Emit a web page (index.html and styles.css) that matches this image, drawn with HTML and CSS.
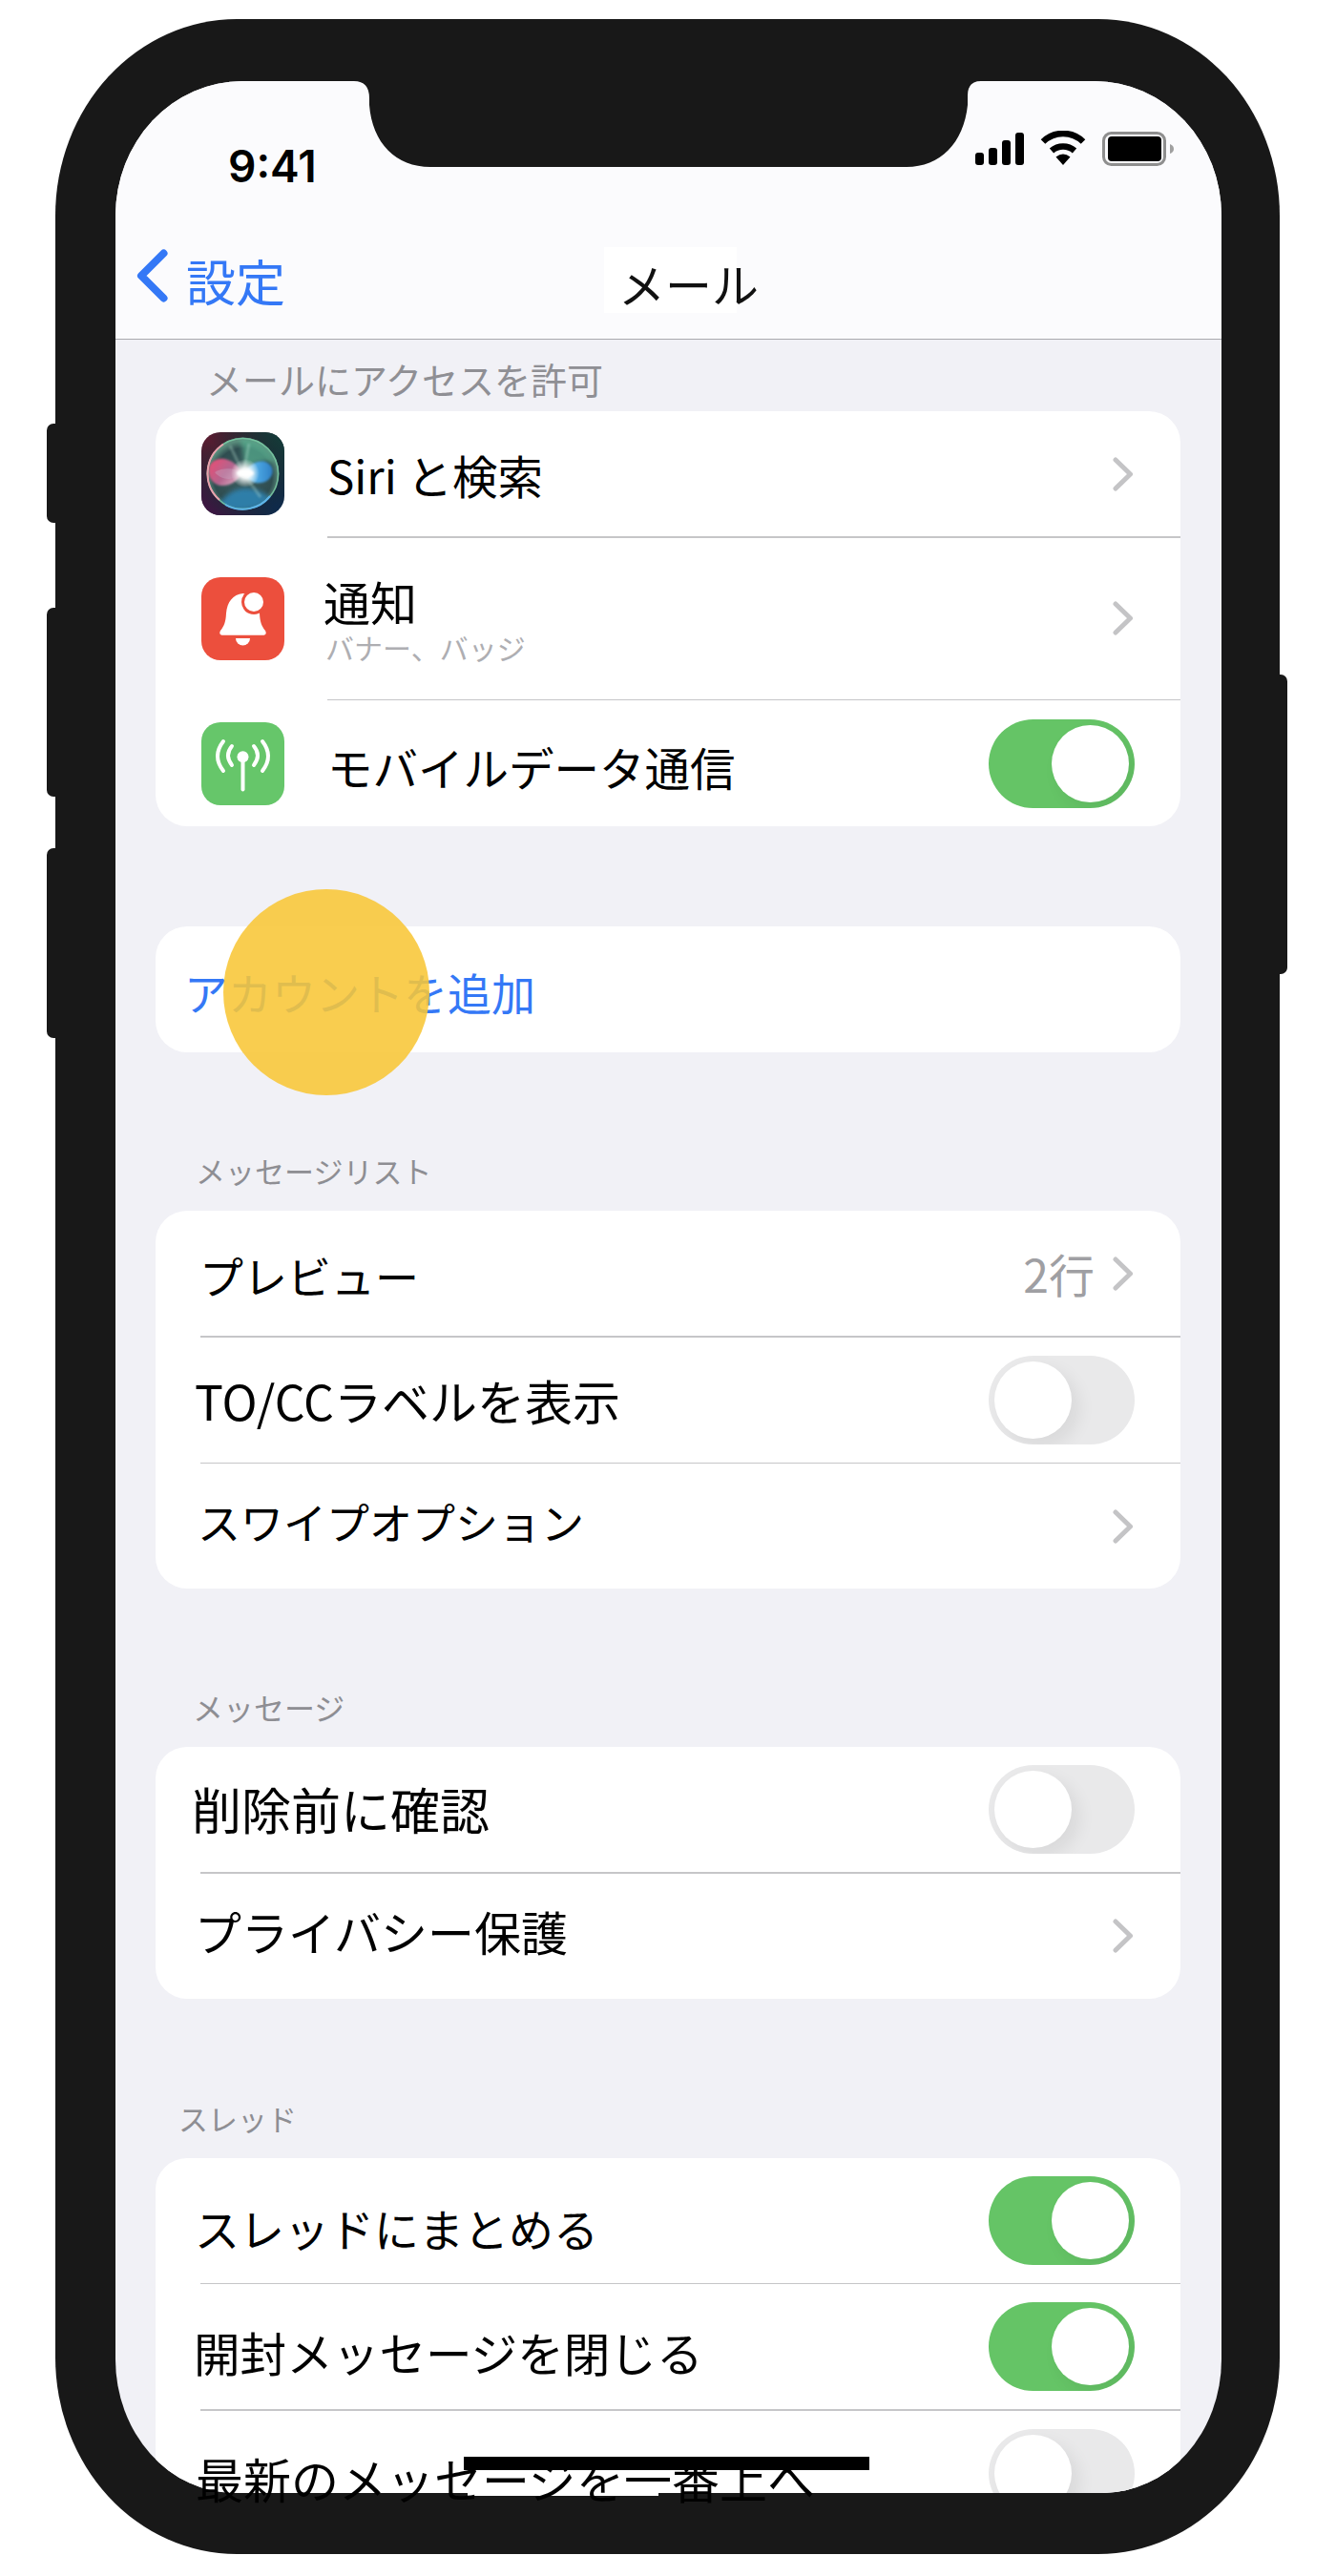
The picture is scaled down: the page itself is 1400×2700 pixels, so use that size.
FILE: index.html
```html
<!DOCTYPE html>
<html lang="ja">
<head>
<meta charset="utf-8">
<title>メール</title>
<link rel="stylesheet" href="styles.css">
</head>
<body>
<div class="device">
  <span class="btn-side btn-mute"></span>
  <span class="btn-side btn-up"></span>
  <span class="btn-side btn-down"></span>
  <span class="btn-side btn-power"></span>
  <div class="screen">
    <header class="nav">
      <div class="status">
        <span class="time">9:41</span>
        <div class="status-icons">
          <svg class="ic-signal" width="51" height="34" viewBox="0 0 51 34"><rect x="0" y="21" width="9" height="13" rx="3"/><rect x="14" y="16" width="9" height="18" rx="3"/><rect x="28" y="8" width="9" height="26" rx="3"/><rect x="42" y="0" width="9" height="34" rx="3"/></svg>
          <svg class="ic-wifi" width="48" height="36" viewBox="0 0 48 36"><path d="M3 11.5A30 30 0 0 1 45 11.5" fill="none" stroke="#000" stroke-width="6.5"/><path d="M12 21A18 18 0 0 1 36 21" fill="none" stroke="#000" stroke-width="6.5"/><path d="M24 36L16.500 27.500Q24 21.500 31.500 27.500Z"/></svg>
          <svg class="ic-batt" width="75" height="36" viewBox="0 0 75 36"><rect x="1.500" y="1.500" width="64" height="33" rx="8" fill="none" stroke="#8e8e8e" stroke-width="3"/><rect x="6" y="5" width="56" height="26" rx="4"/><path d="M71 13Q75 14.500 75 18Q75 21.500 71 23Z" fill="#a0a0a0"/></svg>
        </div>
      </div>
      <div class="navrow">
        <div class="back">
          <svg class="back-chev" width="33" height="56" viewBox="0 0 33 56"><path d="M28.500 4.500L5 28L28.500 51.500" fill="none" stroke="#3478f6" stroke-width="8" stroke-linecap="round" stroke-linejoin="round"/></svg>
          <span class="back-text">設定</span>
        </div>
        <div class="title">メール</div>
      </div>
    </header>

    <main class="content">
      <div class="label label-first">メールにアクセスを許可</div>
      <section class="card">
        <div class="row row-a">
          <svg class="app" width="87" height="87" viewBox="0 0 87 87">
            <defs>
              <linearGradient id="sbg" x1="0" y1="0" x2="1" y2="1"><stop offset="0" stop-color="#641a30"/><stop offset=".5" stop-color="#1c2a33"/><stop offset="1" stop-color="#0c2a50"/></linearGradient>
              <linearGradient id="sbg2" x1="1" y1="0" x2="0" y2="1"><stop offset="0" stop-color="#12403a"/><stop offset=".5" stop-color="#1c2a33" stop-opacity="0"/><stop offset="1" stop-color="#4a0f48"/></linearGradient>
              <radialGradient id="sph" cx=".5" cy=".55" r=".5"><stop offset="0" stop-color="#3d5f62"/><stop offset=".8" stop-color="#2f4d50"/><stop offset="1" stop-color="#5a8c7c"/></radialGradient>
              <linearGradient id="lobeR" x1="0" y1="0" x2="1" y2=".6"><stop offset="0" stop-color="#ef4a72"/><stop offset=".6" stop-color="#b4658e"/><stop offset="1" stop-color="#d9a8c0"/></linearGradient>
              <linearGradient id="lobeB" x1="0" y1=".5" x2="1" y2=".5"><stop offset="0" stop-color="#9fe0ee"/><stop offset=".5" stop-color="#4aa5e2"/><stop offset="1" stop-color="#2f7fc4"/></linearGradient>
              <radialGradient id="glow"><stop offset="0" stop-color="#fff"/><stop offset=".35" stop-color="#fff" stop-opacity=".9"/><stop offset="1" stop-color="#fff" stop-opacity="0"/></radialGradient>
              <filter id="b2"><feGaussianBlur stdDeviation="2.500"/></filter>
              <filter id="b1"><feGaussianBlur stdDeviation=".8"/></filter>
              <clipPath id="icl"><rect width="87" height="87" rx="20"/></clipPath>
              <clipPath id="scl"><circle cx="43.500" cy="43.500" r="38"/></clipPath>
            </defs>
            <g clip-path="url(#icl)">
              <rect width="87" height="87" fill="url(#sbg)"/>
              <rect width="87" height="87" fill="url(#sbg2)"/>
              <circle cx="43.500" cy="43.500" r="38" fill="url(#sph)"/>
              <g clip-path="url(#scl)">
                <path d="M40 8C54 4 70 14 78 32C66 28 54 32 46 40C44 28 44 18 40 8Z" fill="#58b090" filter="url(#b2)" opacity=".7"/>
                <path d="M18 76C30 58 50 52 72 68C62 84 30 86 18 76Z" fill="#2f86b8" filter="url(#b2)" opacity=".85"/>
                <path d="M44 43C36 30 20 22 10 33C4 42 10 56 22 56C32 56 38 50 44 43Z" fill="url(#lobeR)" filter="url(#b1)"/>
                <path d="M44 43C50 54 62 56 70 50C77 44 76 34 67 31C57 29 50 35 44 43Z" fill="url(#lobeB)" filter="url(#b1)"/>
                <path d="M14 42C24 36 36 38 44 43C36 50 22 52 14 42Z" fill="#c8a0bc" opacity=".45"/>
                <path d="M44 43L50 12M44 43L30 14M44 43L62 68" stroke="#bfe8d8" stroke-width="3" opacity=".3" filter="url(#b1)"/>
              </g>
              <circle cx="43.500" cy="43.500" r="37" fill="none" stroke="#79c8a2" stroke-width="1.500" opacity=".85"/>
              <path d="M23 12.500A37 37 0 0 0 19 71" fill="none" stroke="#eba0ac" stroke-width="2"/>
              <path d="M25 76A37 37 0 0 0 72 67" fill="none" stroke="#5db4ea" stroke-width="2"/>
              <circle cx="46" cy="43" r="15" fill="url(#glow)"/>
              <ellipse cx="46" cy="43" rx="9" ry="3.500" fill="#fff" filter="url(#b1)"/>
            </g>
          </svg>
          <span class="text text-app t-siri">Siri と検索</span>
          <svg class="chev" width="21" height="36" viewBox="0 0 21 36"><path d="M3 3L18.500 18L3 33" fill="none" stroke="#c4c4c6" stroke-width="5" stroke-linecap="round" stroke-linejoin="round"/></svg>
        </div>
        <div class="sep sep-app"></div>
        <div class="row row-b">
          <svg class="app" width="87" height="87" viewBox="0 0 87 87">
            <rect width="87" height="87" rx="20" fill="#ec4f3d"/>
            <path d="M43.500 17C33 18 27 26 26 38C25.500 47 24 51 20 56Q18 60 21.500 60.700H65.500Q69 60 67 56C63 51 61.500 47 61 38C60 26 54 18 43.500 17Z" fill="#fff"/>
            <circle cx="55" cy="26" r="13" fill="#ec4f3d"/>
            <circle cx="55" cy="26" r="10" fill="#fff"/>
            <path d="M36 64H51A7.500 7.500 0 0 1 36 64Z" fill="#fff"/>
          </svg>
          <div class="stack">
            <span class="text t-notify">通知</span>
            <span class="sub">バナー、バッジ</span>
          </div>
          <svg class="chev" width="21" height="36" viewBox="0 0 21 36"><path d="M3 3L18.500 18L3 33" fill="none" stroke="#c4c4c6" stroke-width="5" stroke-linecap="round" stroke-linejoin="round"/></svg>
        </div>
        <div class="sep sep-app"></div>
        <div class="row row-c">
          <svg class="app" width="87" height="87" viewBox="0 0 87 87">
            <rect width="87" height="87" rx="20" fill="#66c66a"/>
            <g fill="none" stroke="#fff" stroke-width="4" stroke-linecap="round">
              <path d="M23 20Q11 35.500 23 51"/>
              <path d="M32 25Q24 34.500 32 45"/>
              <path d="M64 20Q76 35.500 64 51"/>
              <path d="M55 25Q63 34.500 55 45"/>
              <path d="M43.500 38V70.500"/>
            </g>
            <circle cx="43.500" cy="36.300" r="6" fill="#fff"/>
          </svg>
          <span class="text text-app t-mobile">モバイルデータ通信</span>
          <span class="toggle on"><i></i></span>
        </div>
      </section>

      <section class="card card-add">
        <div class="row-add"><span class="add-text">アカウントを追加</span></div>
      </section>

      <div class="label label-list">メッセージリスト</div>
      <section class="card">
        <div class="row row-a pl">
          <span class="text t-preview">プレビュー</span>
          <span class="value">2行</span>
          <svg class="chev chev-v" width="21" height="36" viewBox="0 0 21 36"><path d="M3 3L18.500 18L3 33" fill="none" stroke="#c4c4c6" stroke-width="5" stroke-linecap="round" stroke-linejoin="round"/></svg>
        </div>
        <div class="sep sep-text"></div>
        <div class="row row-a pl">
          <span class="text t-tocc">TO/CCラベルを表示</span>
          <span class="toggle"><i></i></span>
        </div>
        <div class="sep sep-text"></div>
        <div class="row row-a pl">
          <span class="text t-swipe">スワイプオプション</span>
          <svg class="chev" width="21" height="36" viewBox="0 0 21 36"><path d="M3 3L18.500 18L3 33" fill="none" stroke="#c4c4c6" stroke-width="5" stroke-linecap="round" stroke-linejoin="round"/></svg>
        </div>
      </section>

      <div class="label label-msg">メッセージ</div>
      <section class="card">
        <div class="row row-a pl">
          <span class="text t-delete">削除前に確認</span>
          <span class="toggle"><i></i></span>
        </div>
        <div class="sep sep-text"></div>
        <div class="row row-a pl">
          <span class="text t-privacy">プライバシー保護</span>
          <svg class="chev" width="21" height="36" viewBox="0 0 21 36"><path d="M3 3L18.500 18L3 33" fill="none" stroke="#c4c4c6" stroke-width="5" stroke-linecap="round" stroke-linejoin="round"/></svg>
        </div>
      </section>

      <div class="label label-thread">スレッド</div>
      <section class="card">
        <div class="row row-a pl">
          <span class="text t-group">スレッドにまとめる</span>
          <span class="toggle on"><i></i></span>
        </div>
        <div class="sep sep-text"></div>
        <div class="row row-a pl">
          <span class="text t-close">開封メッセージを閉じる</span>
          <span class="toggle on"><i></i></span>
        </div>
        <div class="sep sep-text"></div>
        <div class="row row-a pl">
          <span class="toggle"><i></i></span>
        </div>
      </section>
    </main>

    <svg class="notch" width="660" height="90" viewBox="0 0 660 90"><path d="M0 0Q16 0 16 18V25C19 65 44 90 80 90H579C614 90 639 65 643 25V15Q643 0 657 0Z" fill="#181818"/></svg>
    <span class="tap"></span>
  </div>
  <span class="edge-patch"></span>
  <span class="last-label">最新のメッセージを一番上へ</span>
  <span class="home-bar"></span>
</div>
</body>
</html>
```
FILE: styles.css
```css
* { box-sizing: border-box; }
html, body { margin: 0; background: #fff; }
body { font-family: "Noto Sans CJK JP", "Noto Sans", sans-serif; padding: 20px 0 0 58px; height: 2700px; overflow: hidden; }

.device { position: relative; width: 1283px; height: 2657px; background: #181818; border-radius: 190px / 206px; padding: 65px 61px 64px 63px; }
.btn-side { position: absolute; width: 14px; left: -9px; background: #181818; border-radius: 7px 0 0 7px; }
.btn-mute { top: 424px; height: 104px; }
.btn-up { top: 617px; height: 198px; }
.btn-down { top: 869px; height: 199px; }
.btn-power { left: auto; right: -8px; top: 687px; height: 314px; border-radius: 0 7px 7px 0; }

.screen { position: relative; width: 1159px; height: 2528px; background: #f1f1f6; border-radius: 133px 133px 125px 125px / 141px 141px 140px 140px; overflow: hidden; }

.nav { height: 271px; background: #fbfbfd; border-bottom: 1.5px solid #a9a9ad; }
.status { display: flex; justify-content: space-between; height: 170px; padding: 54px 50px 0 118px; }
.time { font-family: Inter, "Liberation Sans", sans-serif; font-weight: 600; font-size: 46px; line-height: 1; margin-top: 12px; color: #000; }
.status-icons { display: flex; align-items: flex-start; }
.ic-wifi { margin-left: 17px; margin-top: -2px; }
.ic-batt { margin-left: 17px; margin-top: -1px; }

.navrow { display: flex; align-items: flex-start; padding: 4px 0 0 22px; }
.back { display: flex; align-items: flex-start; width: 490px; }
.back-chev { margin-top: 2px; }
.back-text { margin-left: 19px; font-size: 52px; line-height: 70px; color: #3478f6; }
.title { width: 139px; height: 69px; background: #fff; padding-left: 15px; font-size: 49px; line-height: 76px; white-space: nowrap; color: #111; }

.content { padding: 0 43px 0 42px; }
.label { color: #8e8e93; font-size: 31px; line-height: 40px; height: 42px; }
.label-first { font-size: 38px; color: #8f8f94; margin: 16px 0 0 53px; height: 59px; line-height: 50px; }
.label-list { margin: 104px 0 0 42px; }
.label-msg { font-size: 32px; margin: 104px 0 0 39px; }
.label-thread { margin: 105px 0 0 24px; }
.label + .card { margin-top: 20px; }
.label-first + .card { margin-top: 0; }

.card { background: #fff; border-radius: 33px; overflow: hidden; }
.card-add { margin-top: 105px; height: 132px; }
.row-add { height: 132px; display: flex; align-items: center; padding-left: 30px; }
.add-text { font-size: 46px; color: #3478f6; line-height: 1; margin-top: 3px; }

.row { display: flex; align-items: center; padding-left: 48px; padding-right: 48px; }
.row.pl { padding-left: 41px; }
.row-a { height: 131px; }
.row-b { height: 169px; }
.row-c { height: 132px; }
.sep { height: 1.500px; background: #c6c6c8; }
.sep-app { margin-left: 180px; }
.sep-text { margin-left: 47px; }

.text { line-height: 1.2; color: #000; white-space: nowrap; }
.text-app { margin-left: 45px; }
.t-siri { font-size: 47.500px; margin-top: 2px; }
.t-notify { font-size: 49px; }
.t-mobile { font-size: 47.500px; margin-top: 6px; }
.t-preview { font-size: 46px; margin: 5px 0 0 5px; }
.t-tocc { font-size: 50px; margin-top: 0; }
.t-swipe { font-size: 45px; margin: 0 0 10px 3px; }
.t-delete { font-size: 52px; margin: 0 0 0 -3px; }
.t-privacy { font-size: 49px; margin-bottom: 10px; }
.t-group { font-size: 47px; margin-top: 16px; }
.t-close { font-size: 48.600px; margin: 12px 0 0 -1px; }

.stack { display: flex; flex-direction: column; margin-left: 41px; margin-top: 3px; }
.stack .text { line-height: 52px; }
.sub { font-size: 30px; line-height: 36px; color: #aeaeb2; margin: 4px 0 0 2px; }

.app { flex: none; }
.chev { margin-left: auto; flex: none; margin-right: 2px; }
.chev-v { margin-left: 19px; }
.value { margin-left: auto; font-size: 48px; line-height: 1.2; color: #9f9fa3; }

.toggle { margin-left: auto; flex: none; width: 153px; height: 93px; border-radius: 47px; background: #e9e9ea; display: flex; align-items: center; padding: 0 6px; overflow: hidden; }
.toggle i { display: block; width: 81px; height: 81px; border-radius: 50%; background: #fff; box-shadow: 8px 8px 18px rgba(0,0,0,.07); }
.toggle.on { background: #65c466; justify-content: flex-end; }

.notch { position: absolute; left: 250px; top: 0; }
.tap { position: absolute; left: 113px; top: 847px; width: 216px; height: 216px; border-radius: 50%; background: rgba(248,198,55,.88); }
.edge-patch { position: absolute; left: 432px; top: 2593px; width: 200px; height: 3px; background: #fff; }
.last-label { position: absolute; left: 147px; top: 2547px; font-size: 50px; line-height: 60px; color: #000; white-space: nowrap; }
.home-bar { position: absolute; left: 428px; top: 2555px; width: 425px; height: 14px; background: #000; }
```
